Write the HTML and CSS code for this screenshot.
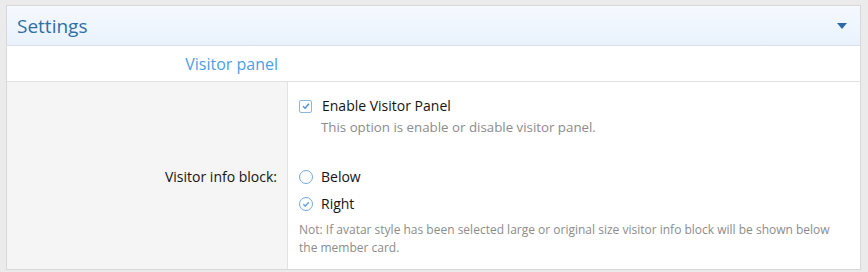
FILE: index.html
```html
<!DOCTYPE html>
<html lang="en">
<head>
    <meta charset="UTF-8">
    <meta name="viewport" content="width=device-width, initial-scale=1.0">
    <title>Settings</title>
    <link rel="stylesheet" href="styles.css">
</head>
<body>
    <div class="block">
        <div class="block-header">
            <h2>Settings</h2>
            <span class="toggle"></span>
        </div>

        <div class="section-row">
            <div class="section-label">Visitor panel</div>
        </div>

        <div class="form-rows">
            <div class="row-label"></div>
            <div class="row-input first">
                <label class="choice">
                    <span class="check-box">
                        <svg width="10" height="10" viewBox="0 0 10 10"><path d="M2 5.2 L4.1 7.2 L8 2.8" fill="none" stroke="#4a90d6" stroke-width="1.4"/></svg>
                    </span>
                    Enable Visitor Panel
                </label>
                <div class="hint">This option is enable or disable visitor panel.</div>
            </div>

            <div class="row-label second">Visitor info block:</div>
            <div class="row-input second">
                <label class="choice">
                    <span class="radio"></span>
                    Below
                </label>
                <label class="choice">
                    <span class="radio">
                        <svg width="10" height="10" viewBox="0 0 10 10"><path d="M2.3 5.2 L4.3 7.1 L7.8 3.2" fill="none" stroke="#5a9ee0" stroke-width="1.4"/></svg>
                    </span>
                    Right
                </label>
                <div class="hint note">Not: If avatar style has been selected large or original size visitor info block will be shown below the member card.</div>
            </div>
        </div>
    </div>
</body>
</html>
```

FILE: styles.css
```css
body {
    font-family: "Open Sans", "Noto Sans", sans-serif;
    background: #ebebeb;
    margin: 0;
    padding: 5px 7px 3px 6px;
    color: #141414;
}
.block {
    border: 1px solid #d8d8d8;
    background: #fff;
}
.block-header {
    display: flex;
    align-items: center;
    justify-content: space-between;
    height: 39px;
    padding: 0 13px 0 10px;
    background: linear-gradient(to bottom, #f5f9fe, #e9f2fc);
    border-bottom: 1px solid #d8dfe6;
}
.block-header h2 {
    margin: 0;
    font-size: 19px;
    font-weight: normal;
    color: #2f6fa6;
}
.toggle {
    width: 0;
    height: 0;
    border-left: 5px solid transparent;
    border-right: 5px solid transparent;
    border-top: 6px solid #2a6aa6;
}
.section-row {
    height: 35px;
    display: flex;
    align-items: center;
    border-bottom: 1px solid #e2e2e2;
}
.section-label {
    width: 271px;
    text-align: right;
    font-size: 16px;
    color: #4aa0e6;
}
.form-rows {
    display: grid;
    grid-template-columns: 281px 1fr;
}
.row-label {
    background: #f5f5f5;
    border-right: 1px solid #e2e2e2;
    text-align: right;
    padding-right: 10px;
    font-size: 14px;
    line-height: 20px;
}
.row-label.second {
    padding-top: 31px;
}
.row-input {
    padding: 14px 14px 0 11px;
    font-size: 14px;
}
.row-input.second {
    padding-top: 31px;
    padding-bottom: 12px;
}
.choice {
    display: flex;
    align-items: center;
    gap: 8px;
    line-height: 20px;
    margin-bottom: 7px;
}
.first .choice {
    gap: 10px;
    margin-bottom: 2px;
}
.check-box {
    width: 11px;
    height: 11px;
    border: 1px solid #8ab6e2;
    border-radius: 2px;
    display: flex;
    align-items: center;
    justify-content: center;
    background: #fff;
}
.radio {
    width: 12px;
    height: 12px;
    border: 1.5px solid #72a9de;
    border-radius: 50%;
    display: flex;
    align-items: center;
    justify-content: center;
}
.hint {
    color: #8c8c8c;
    font-size: 13.3px;
    line-height: 18px;
    padding-left: 22px;
}
.hint.note {
    font-size: 12px;
    padding-left: 0;
}
```
